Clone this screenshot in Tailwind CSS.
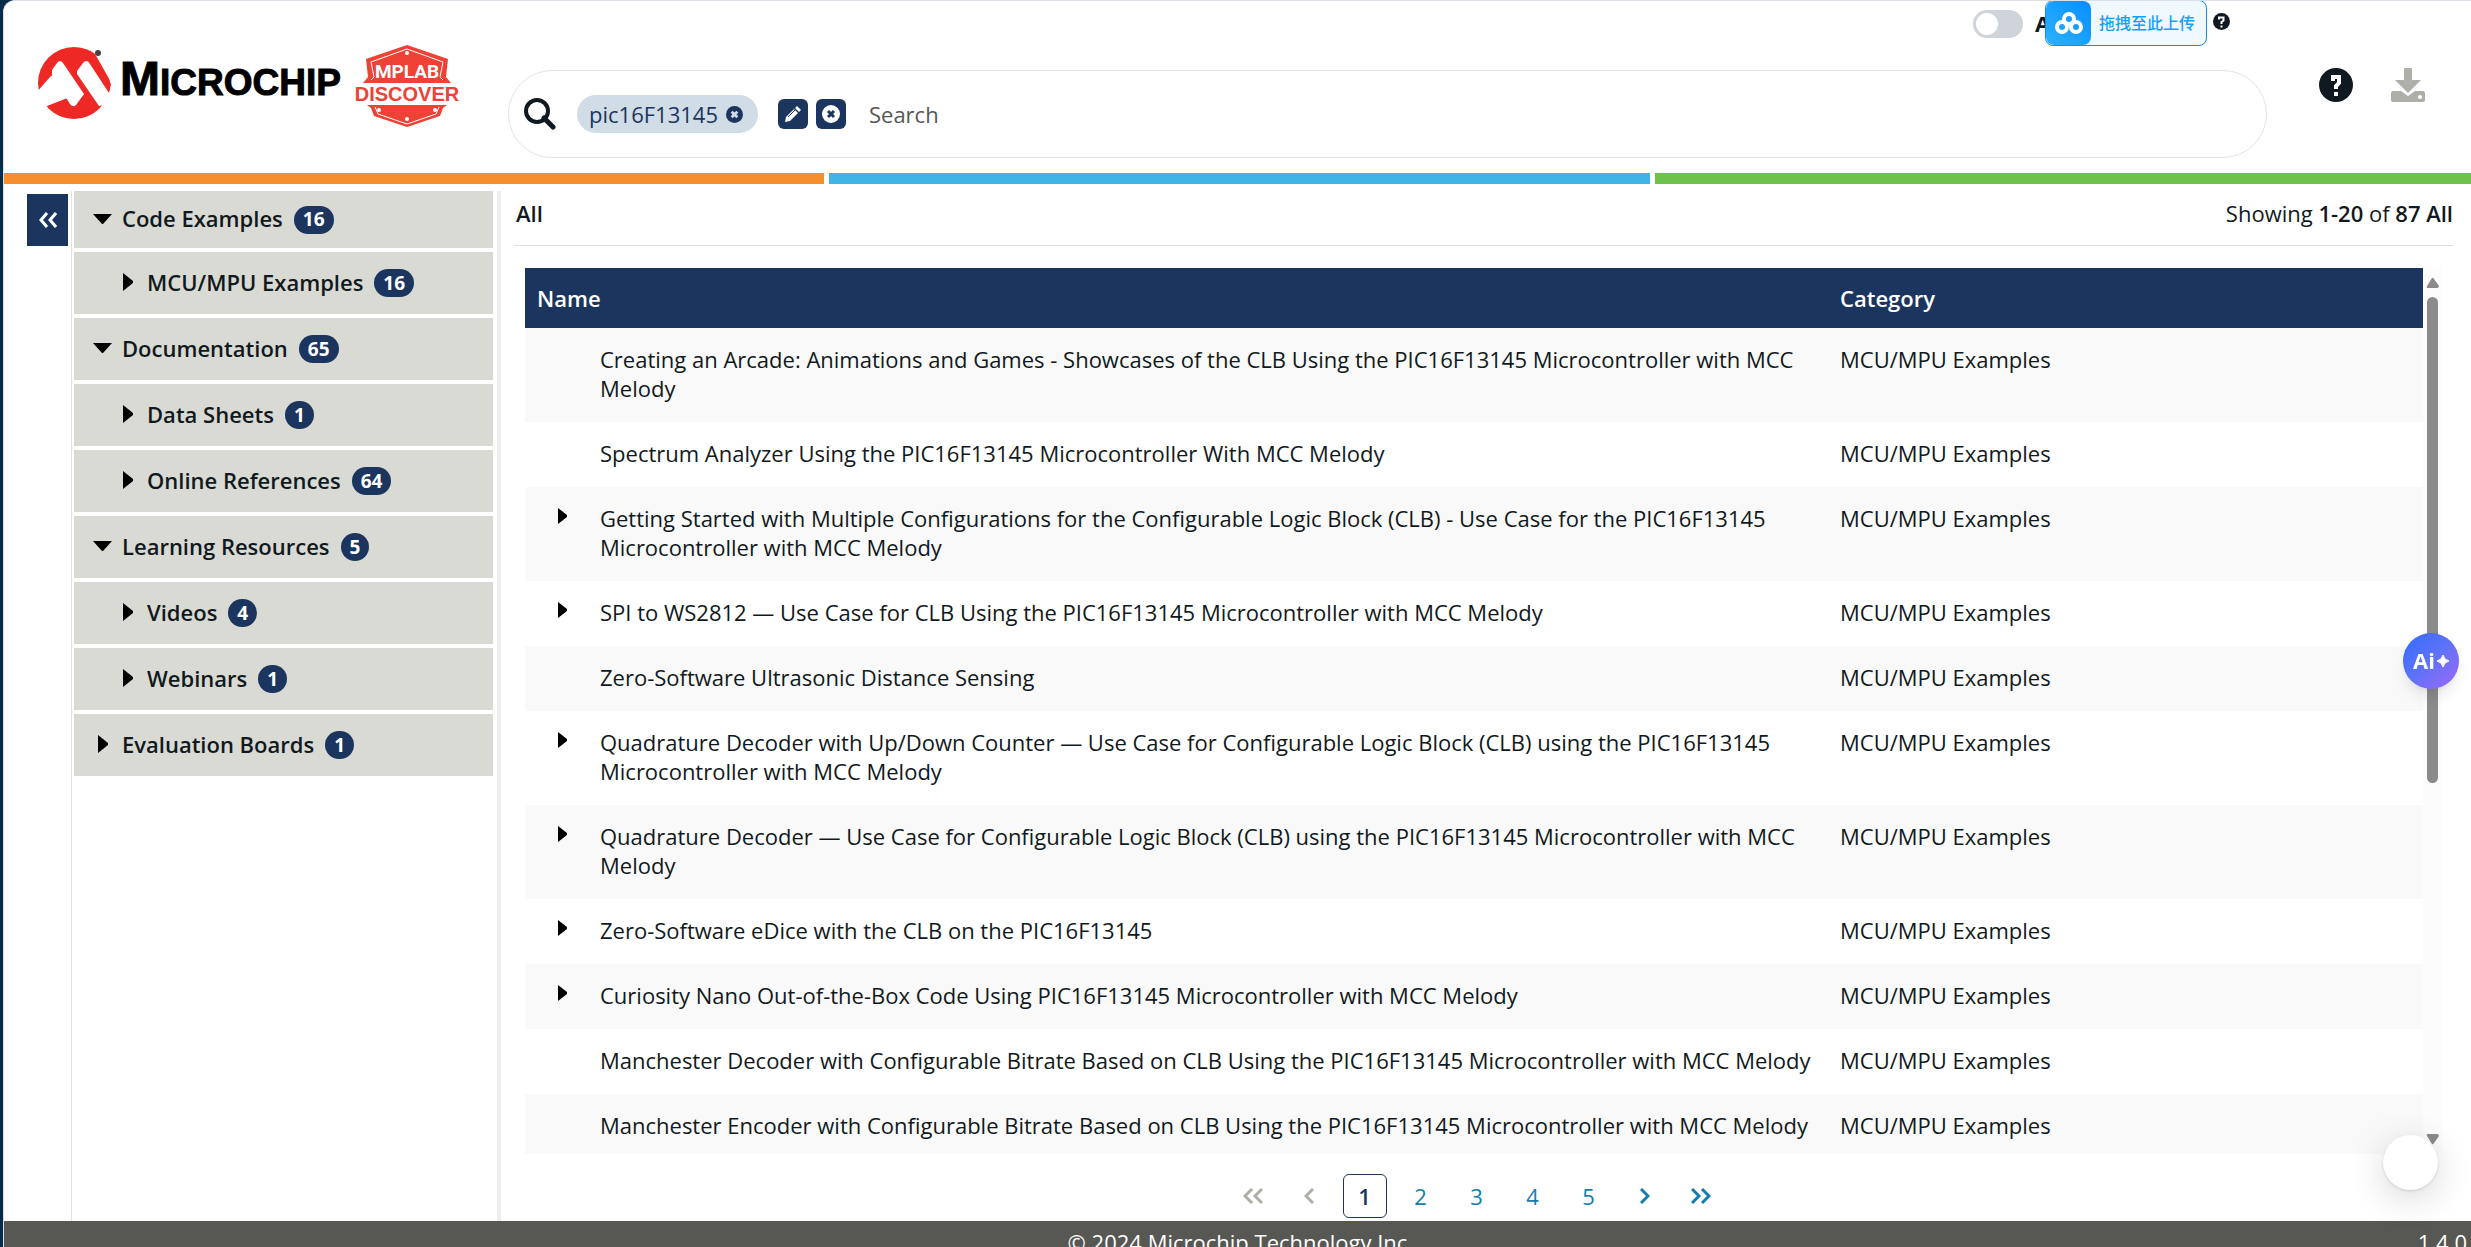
<!DOCTYPE html>
<html lang="en">

<head>
    <meta charset="UTF-8">
    <meta name="viewport" content="width=device-width, initial-scale=1.0">
    <title>MPLAB Discover</title>
    <script src="https://cdn.jsdelivr.net/npm/@tailwindcss/browser@4"></script>
</head>

<body class="bg-[#062c49] pl-[3px] font-['Open_Sans','Noto_Sans_CJK_SC',sans-serif] text-[22px] leading-[29px] text-[#111920]">
    <div class="flex h-screen flex-col overflow-hidden rounded-tl-xl border-t border-l border-[#dcdfe5] bg-white">

        <!-- Header -->
        <header class="flex h-[172px] shrink-0">
            <a href="#" class="flex w-[504px] shrink-0 items-start gap-3 pt-11 pl-8" aria-label="Microchip MPLAB Discover">
                <svg width="306" height="76" viewBox="0 0 306 76">
                    <circle cx="38" cy="38" r="36" fill="#ee2824" />
                    <path d="M54 0L76 39V0ZM0 48L14 32Q16 29 19 32L34 52L11 61L0 76Z" fill="#fff" />
                    <path d="M16 25L21 18Q24 14 27 18L48 49L40 60Q37 63 34 59L16 31ZM41 26L47 18Q50 14 54 18L80 58L63 61L41 29Z" fill="#fff" />
                    <path d="M54 5L75 39L73 48L52 16Z" fill="#ee2824" />
                    <circle cx="62" cy="8" r="3" fill="#444" />
                    <text x="84" y="50" font-family="Liberation Sans, sans-serif" font-weight="700" font-size="37" fill="#000" stroke="#000"><tspan font-size="48">M</tspan>ICROCHIP</text>
                </svg>
                <svg width="106" height="84" viewBox="0 0 106 84">
                    <path d="M53 0L94 14L92 32L97 38H9L14 32L12 14ZM13 60H93L89 63L86 71L53 82L20 71L17 63Z" fill="#ef4136" />
                    <path d="M17 35L20 32L17 17L53 4L89 17L86 32L89 35M21 62L24 69L53 79L82 69L85 62" fill="none" stroke="#fff" />
                    <g fill="#fff">
                        <circle cx="53" cy="8" r="2" /><circle cx="25" cy="65" r="2" /><circle cx="81" cy="65" r="2" /><circle cx="53" cy="74" r="2" />
                    </g>
                    <text x="53" y="33" text-anchor="middle" font-family="Roboto, sans-serif" font-weight="700" font-size="19" fill="#fff">MPLAB</text>
                    <text x="53" y="56" text-anchor="middle" font-family="Liberation Sans, sans-serif" font-weight="700" font-size="20" fill="#ef4136">DISCOVER</text>
                </svg>
            </a>

            <div class="min-w-0 flex-1">
                <div class="flex h-[45px] justify-end pr-[37px]">
                    <input id="adv" type="checkbox" class="relative mt-[9px] mr-3 h-7 w-[50px] appearance-none rounded-full bg-[#cfd3da] before:absolute before:top-[3px] before:left-[3px] before:size-[22px] before:rounded-full before:bg-white">
                    <div class="relative w-[178px]">
                        <label for="adv" class="block pt-2 font-bold">A</label>
                        <!-- Upload drop target -->
                        <button class="absolute -top-px left-[10px] flex h-[46px] w-[162px] items-center overflow-hidden rounded-lg border border-[#0a91f5] bg-[#f0f9ff] text-base font-medium text-[#12a2fb]">
                            <span class="flex h-full w-[45px] shrink-0 items-center justify-center rounded-lg bg-linear-to-tr from-[#2bb2ff] to-[#068dff]">
                                <svg width="28" height="24" viewBox="0 0 28 24" fill="none" stroke="#fff" stroke-width="4">
                                    <circle cx="14" cy="8" r="5" /><circle cx="7" cy="16" r="5" /><circle cx="21" cy="16" r="5" />
                                </svg>
                            </span>
                            <span class="pl-2 whitespace-nowrap">拖拽至此上传</span>
                        </button>
                    </div>
                    <svg class="mt-3 size-[17px]" viewBox="0 0 34 34" aria-label="Help">
                        <circle cx="17" cy="17" r="17" fill="#111920" />
                        <path d="M12 13V9H21V15L17 18V22M17 25V29" fill="none" stroke="#fff" stroke-width="4" />
                    </svg>
                </div>

                <!-- Search bar -->
                <div class="mt-6 flex h-[88px] items-center rounded-[44px] border border-[#e3e3e3] pl-[15px]">
                    <svg class="size-8 shrink-0" viewBox="0 0 32 32" fill="none" stroke="#111920">
                        <circle cx="13" cy="13" r="11" stroke-width="4" />
                        <path d="M20 20L29 29" stroke-width="5" stroke-linecap="round" />
                    </svg>
                    <span class="ml-[21px] flex h-[38px] items-center gap-2 rounded-full bg-[#d0dce6] pr-[15px] pl-3 text-[#1c355e]">pic16F13145
                        <button aria-label="Remove term"><svg class="size-[17px]" viewBox="0 0 18 18"><circle cx="9" cy="9" r="9" fill="#1c355e" /><path d="M6 6L12 12M12 6L6 12" stroke="#d0dce6" stroke-width="3" /></svg></button>
                    </span>
                    <button class="ml-5 flex size-[30px] items-center justify-center rounded-md bg-[#1c355e]" aria-label="Edit">
                        <svg class="size-4" viewBox="0 0 16 16" fill="#fff"><path d="M12 0L16 4L14 6L10 2ZM9 3L13 7L5 15L0 16L1 11Z" /><path d="M3 11L10 4" stroke="#1c355e" /></svg>
                    </button>
                    <button class="ml-2 flex size-[30px] items-center justify-center rounded-md bg-[#1c355e]" aria-label="Clear all">
                        <svg class="size-[18px]" viewBox="0 0 18 18"><circle cx="9" cy="9" r="9" fill="#fff" /><path d="M6 6L12 12M12 6L6 12" stroke="#1c355e" stroke-width="3" /></svg>
                    </button>
                    <input type="text" placeholder="Search" aria-label="Search" class="ml-[23px] min-w-0 flex-1 outline-none placeholder:text-[#575753]">
                </div>
            </div>

            <div class="flex w-[204px] shrink-0 items-start gap-[38px] pt-[67px] pl-[52px]">
                <button aria-label="Help">
                    <svg class="size-[34px]" viewBox="0 0 34 34">
                        <circle cx="17" cy="17" r="17" fill="#111920" />
                        <path d="M14 13V9H20V15L17 18V21M17 24V28" fill="none" stroke="#fff" stroke-width="4" />
                    </svg>
                </button>
                <button aria-label="Download">
                    <svg class="size-[34px]" viewBox="0 0 34 34" fill="#afafaa">
                        <path d="M13 1Q13 0 14 0H20Q21 0 21 1V12H30L17 25L4 12H13Z" />
                        <path fill-rule="evenodd" d="M2 23H10L17 28L24 23H32Q34 23 34 25V32Q34 34 32 34H2Q0 34 0 32V25Q0 23 2 23ZM29 27A2 2 0 1 0 29 31A2 2 0 1 0 29 27Z" />
                    </svg>
                </button>
            </div>
        </header>

        <div class="-mr-1 grid h-[11px] shrink-0 grid-cols-3 gap-[5px]">
            <div class="bg-[#f78e2e]"></div>
            <div class="bg-[#41b4e6]"></div>
            <div class="bg-[#6cc24a]"></div>
        </div>

        <!-- Main Section -->
        <div class="flex min-h-0 flex-1">
            <div class="w-[67px] shrink-0 pt-[10px] pl-[23px]">
                <button class="flex h-[52px] w-[41px] items-center justify-center bg-[#1c355e]" aria-label="Collapse filters">
                    <svg width="18" height="16" viewBox="0 0 18 16" fill="none" stroke="#fff" stroke-width="3"><path d="M8 1L2 8L8 15M17 1L11 8L17 15" /></svg>
                </button>
            </div>

            <aside class="mt-[7px] w-[430px] shrink-0 border-r-4 border-l border-r-[#eeeeec] border-l-[#e2e2e2] pr-1 pl-[2px]">
                <ul id="filters" class="flex flex-col gap-1"></ul>
            </aside>

            <main class="flex min-w-0 flex-1 flex-col pr-[18px] pl-[13px]">
                <div class="flex h-[62px] shrink-0 items-center justify-between border-b border-[#dedede] pb-[2px]">
                    <h1 class="pl-[2px] font-semibold">All</h1>
                    <p>Showing <b class="font-semibold">1-20</b> of <b class="font-semibold">87 All</b></p>
                </div>

                <div class="mt-[22px] mr-[11px] ml-[11px] flex min-h-0 flex-1 overflow-hidden">
                    <div class="min-w-0 flex-1 overflow-hidden">
                        <table class="w-full table-fixed text-left">
                            <thead>
                                <tr class="h-[60px] bg-[#1c355e] text-white">
                                    <th class="px-3 font-semibold">Name</th>
                                    <th class="w-[595px] px-3 font-semibold">Category</th>
                                </tr>
                            </thead>
                            <tbody id="results"></tbody>
                        </table>
                    </div>
                    <!-- Scrollbar -->
                    <div class="flex w-[19px] shrink-0 flex-col items-center bg-[#fcfcfc] py-[9px]">
                        <svg width="13" height="11" viewBox="0 0 13 11" fill="#8b8b8b"><path d="M6 1Q7 0 8 2L13 9Q13 11 11 11H2Q0 11 1 9Z" /></svg>
                        <div class="mt-[9px] h-[56%] w-[11px] rounded-full bg-[#8b8b8b]"></div>
                        <svg class="mt-auto" width="13" height="11" viewBox="0 0 13 11" fill="#8b8b8b"><path d="M6 10Q7 11 8 9L13 2Q13 0 11 0H2Q0 0 1 2Z" /></svg>
                    </div>
                </div>

                <!-- Pagination -->
                <nav class="flex h-[67px] shrink-0 justify-center gap-3 pt-5 pr-[14px] text-[#147db0]" aria-label="Pages">
                    <button class="flex h-[44px] w-[44px] items-center justify-center text-[#aeaea8]" aria-label="First"><svg width="20" height="16" viewBox="0 0 20 16" fill="none" stroke="currentColor" stroke-width="3"><path d="M9 1L2 8L9 15M19 1L12 8L19 15" /></svg></button>
                    <button class="flex h-[44px] w-[44px] items-center justify-center text-[#aeaea8]" aria-label="Previous"><svg width="10" height="16" viewBox="0 0 10 16" fill="none" stroke="currentColor" stroke-width="3"><path d="M9 1L2 8L9 15" /></svg></button>
                    <button class="h-[44px] w-[44px] rounded-md border border-[#1c355e] font-semibold text-[#1c355e]">1</button>
                    <button class="h-[44px] w-[44px]">2</button>
                    <button class="h-[44px] w-[44px]">3</button>
                    <button class="h-[44px] w-[44px]">4</button>
                    <button class="h-[44px] w-[44px]">5</button>
                    <button class="flex h-[44px] w-[44px] items-center justify-center" aria-label="Next"><svg width="10" height="16" viewBox="0 0 10 16" fill="none" stroke="currentColor" stroke-width="3"><path d="M1 1L8 8L1 15" /></svg></button>
                    <button class="flex h-[44px] w-[44px] items-center justify-center" aria-label="Last"><svg width="20" height="16" viewBox="0 0 20 16" fill="none" stroke="currentColor" stroke-width="3"><path d="M1 1L8 8L1 15M11 1L18 8L11 15" /></svg></button>
                </nav>
            </main>
        </div>

        <!-- Footer -->
        <footer class="grid h-[26px] shrink-0 grid-cols-[1fr_auto_1fr] overflow-hidden bg-[#575753] pt-[7px] text-white">
            <span class="col-start-2">© 2024 Microchip Technology Inc</span>
            <span class="pr-1 text-right">1.4.0</span>
        </footer>
    </div>

    <!-- Floating buttons -->
    <button class="fixed right-3 bottom-[558px] flex size-14 items-center justify-center rounded-full bg-linear-to-br from-[#2a6bff] via-[#5f72f8] to-[#9b66f8] shadow-lg" aria-label="AI assistant">
        <svg class="overflow-visible" width="38" height="20" viewBox="0 0 38 20">
            <text x="1" y="18" font-family="Open Sans, sans-serif" font-weight="700" font-size="22" fill="#fff">Ai</text>
            <path d="M31 4Q32 9 37 10Q32 11 31 16Q30 11 25 10Q30 9 31 4Z" fill="#fff" stroke="#fff" />
        </svg>
    </button>
    <button class="fixed right-[33px] bottom-[57px] size-[55px] rounded-full bg-white shadow-[0_8px_36px_rgba(0,0,0,0.16),0_1px_3px_rgba(0,0,0,0.14)]" aria-label="More"></button>

    <script>
        // name, count, level, open
        const filters = [
            ["Code Examples", 16, 0, true],
            ["MCU/MPU Examples", 16, 1, false],
            ["Documentation", 65, 0, true],
            ["Data Sheets", 1, 1, false],
            ["Online References", 64, 1, false],
            ["Learning Resources", 5, 0, true],
            ["Videos", 4, 1, false],
            ["Webinars", 1, 1, false],
            ["Evaluation Boards", 1, 0, false]
        ];

        // name, expandable
        const results = [
            ["Creating an Arcade: Animations and Games - Showcases of the CLB Using the PIC16F13145 Microcontroller with MCC Melody", false],
            ["Spectrum Analyzer Using the PIC16F13145 Microcontroller With MCC Melody", false],
            ["Getting Started with Multiple Configurations for the Configurable Logic Block (CLB) - Use Case for the PIC16F13145 Microcontroller with MCC Melody", true],
            ["SPI to WS2812 — Use Case for CLB Using the PIC16F13145 Microcontroller with MCC Melody", true],
            ["Zero-Software Ultrasonic Distance Sensing", false],
            ["Quadrature Decoder with Up/Down Counter — Use Case for Configurable Logic Block (CLB) using the PIC16F13145 Microcontroller with MCC Melody", true],
            ["Quadrature Decoder — Use Case for Configurable Logic Block (CLB) using the PIC16F13145 Microcontroller with MCC Melody", true],
            ["Zero-Software eDice with the CLB on the PIC16F13145", true],
            ["Curiosity Nano Out-of-the-Box Code Using PIC16F13145 Microcontroller with MCC Melody", true],
            ["Manchester Decoder with Configurable Bitrate Based on CLB Using the PIC16F13145 Microcontroller with MCC Melody", false],
            ["Manchester Encoder with Configurable Bitrate Based on CLB Using the PIC16F13145 Microcontroller with MCC Melody", false]
        ];

        const down = `<svg class="-ml-[5px] w-[19px]" height="10" viewBox="0 0 19 10"><path d="M0 0H19L10 10H9Z" /></svg>`;
        const right = `<svg class="w-[10px]" height="18" viewBox="0 0 10 18"><path d="M0 0L10 8V10L0 18Z" /></svg>`;

        document.getElementById("filters").innerHTML = filters.map(([name, count, level, open], i) => `
            <li>
                <button class="flex w-full items-center bg-[#dadad4] pb-[2px] text-left ${i === 0 ? "h-[57px]" : "h-[62px]"} ${level ? "pl-[49px]" : "pl-6"}">
                    <span class="w-6 shrink-0">${open ? down : right}</span>
                    <span class="font-semibold">${name}</span>
                    <span class="mt-[2px] ml-[11px] flex h-7 items-center rounded-full bg-[#1c355e] px-[9px] text-[19px] font-bold text-white">${count}</span>
                </button>
            </li>`).join("");

        document.getElementById("results").innerHTML = results.map(([name, expandable]) => `
            <tr class="align-top odd:bg-[#f9f9f9]">
                <td class="px-3 pt-[17px] pb-[19px]">
                    <div class="flex">
                        <span class="w-[63px] shrink-0 pt-1 pl-[21px]">${expandable ? `<button class="block" aria-label="Expand"><svg width="9" height="16" viewBox="0 0 9 16"><path d="M0 0L9 7V9L0 16Z" /></svg></button>` : ""}</span>
                        <span>${name}</span>
                    </div>
                </td>
                <td class="px-3 pt-[17px] pb-[19px]">MCU/MPU Examples</td>
            </tr>`).join("");
    </script>
</body>

</html>
